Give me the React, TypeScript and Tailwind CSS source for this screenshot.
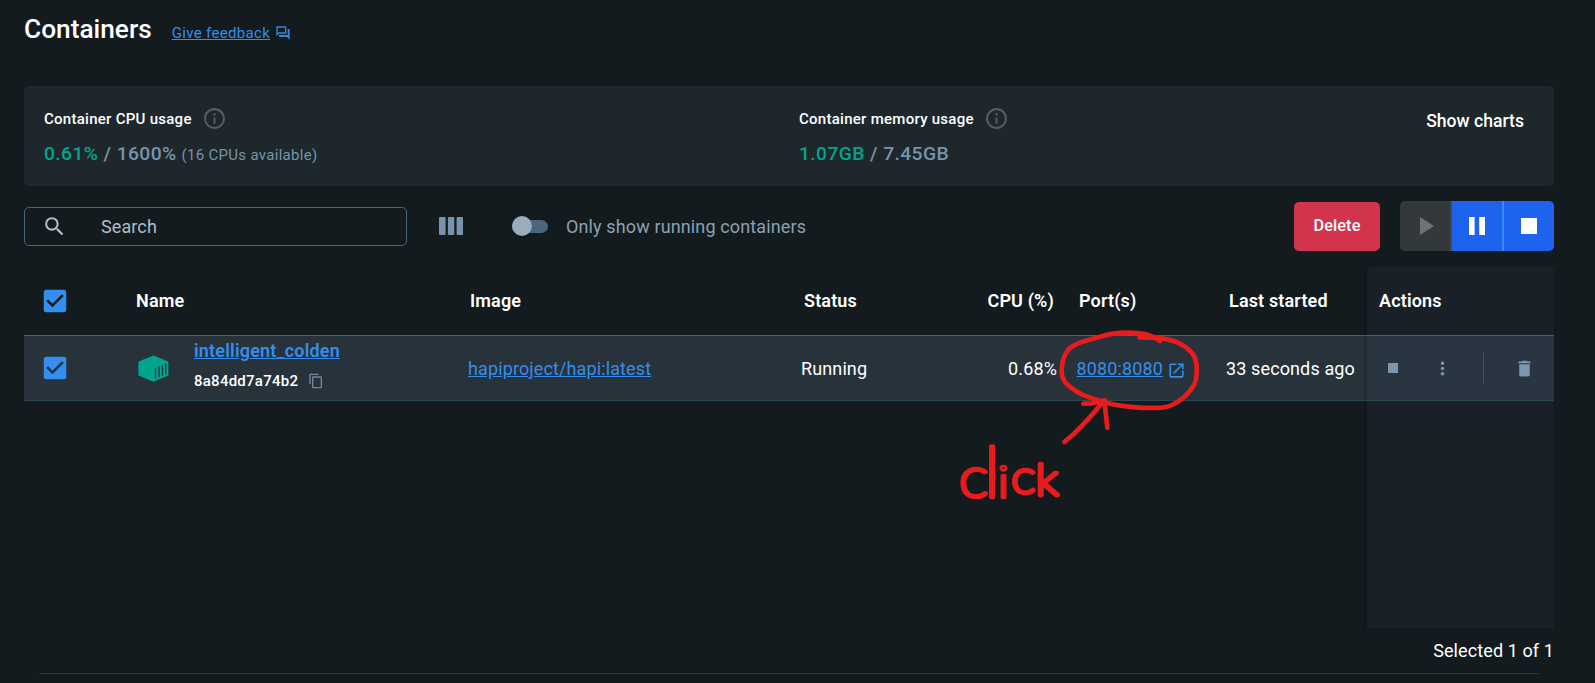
import type { ReactNode } from "react";
import {
  MdCheckBox,
  MdContentCopy,
  MdDelete,
  MdInfoOutline,
  MdMoreVert,
  MdOpenInNew,
  MdOutlineForum,
  MdSearch,
} from "react-icons/md";

const COLUMNS = "grid grid-cols-[112px_332px_333px_156px_119px_150px_141px] items-center";

function ColumnsIcon() {
  return (
    <svg className="h-[18px] w-6 fill-[#7794ab]" viewBox="0 0 24 18">
      <rect x="0" y="0" width="6.6" height="18" rx="1" />
      <rect x="8.9" y="0" width="6.4" height="18" rx="1" />
      <rect x="17.6" y="0" width="6.4" height="18" rx="1" />
    </svg>
  );
}

function ContainerIcon() {
  return (
    <svg className="h-[27px] w-[31px]" viewBox="0 0 31 27">
      <path
        d="M15.4 0.4 29.6 6.2Q30.4 6.6 30.4 7.4V19.6Q30.4 20.4 29.6 20.7L15.4 26.7 1.2 20.7Q0.4 20.4 0.4 19.6V7.4Q0.4 6.6 1.2 6.2Z"
        fill="#00a58c"
      />
      <path d="M17.5 13V23.6M21 11.4V22.2M24.5 9.9V20.8M27.7 8.6V19.5" stroke="#27323b" strokeWidth="1.3" />
    </svg>
  );
}

function Usage({
  title,
  used,
  total,
  note,
}: {
  title: string;
  used: string;
  total: string;
  note?: string;
}) {
  return (
    <div>
      <div className="flex h-[25px] items-center">
        <span className="pt-px text-[15px] font-medium tracking-[0.27px] text-white">{title}</span>
        <MdInfoOutline className="ml-[10px] size-[25px] text-[#555c63]" />
      </div>
      <div className="mt-[11px] flex h-6 items-baseline text-[19.25px] leading-6 font-medium tracking-[0.4px] whitespace-pre text-[#7794ab]">
        <span className="text-[#00a58c]">{used}</span>
        <span> / {total}</span>
        {note && <span className="ml-[5px] text-[15px] font-normal tracking-[0.3px]">{note}</span>}
      </div>
    </div>
  );
}

function Heading({ children, className = "" }: { children: ReactNode; className?: string }) {
  return (
    <div className={`text-[18px] leading-6 font-semibold tracking-[0.15px] text-white ${className}`}>
      {children}
    </div>
  );
}

function Annotation() {
  return (
    <svg
      className="pointer-events-none absolute top-[320px] left-[950px] h-[240px] w-[260px] overflow-visible"
      viewBox="510 180 780 720"
      fill="none"
      stroke="#e81c1c"
      strokeLinecap="round"
      strokeLinejoin="round"
    >
      <g strokeWidth="14">
        <path d="M1078 232 Q1115 232 1150 236 Q1185 242 1206 254 Q1236 272 1244 292 Q1252 312 1250 335 Q1250 365 1237 383 Q1218 410 1195 424 Q1170 441 1145 443 Q1105 445 1068 442 Q1020 439 985 430 Q935 416 905 403 Q870 384 855 366 Q844 350 845 328 Q847 290 865 269 Q878 255 905 246 L960 230 Q1000 218 1040 218 Q1085 218 1110 227 Q1130 234 1140 243" />
        <path d="M853 546 L882 521 Q925 480 968 426 M910 431 L938 430 L975 421 M974 430 L978 468 L982 503" />
      </g>
      <g fontFamily="Lato, sans-serif" fontWeight="100" fontSize="168" strokeWidth="14">
        <text transform="translate(538 711) scale(1.12 1)">
          <tspan x="0">c</tspan>
          <tspan x="66" fontSize="208">l</tspan>
          <tspan x="104" fontSize="128">i</tspan>
          <tspan x="140" dy="-13" fontSize="138">c</tspan>
          <tspan x="204" dy="6" fontSize="134">k</tspan>
        </text>
      </g>
    </svg>
  );
}

export default function App() {
  return (
    <main className="relative flex h-[683px] w-full flex-col overflow-hidden bg-[#141b1e] pr-[41px] pl-6 font-['Roboto',sans-serif] text-white">
      <header className="flex h-[86px] items-baseline pt-[13px]">
        <h1 className="text-[26.25px] leading-8 font-medium">Containers</h1>
        <a className="ml-5 text-[15px] tracking-[0.33px] text-[#338eef] underline underline-offset-1">Give feedback</a>
        <MdOutlineForum className="mt-[12px] ml-[5px] size-4 self-start text-[#3188df]" />
      </header>

      <section className="flex h-[100px] shrink-0 rounded-[5px] bg-[#1d272c] pt-5 pr-[30px] pl-5">
        <div className="w-[755px]">
          <Usage title="Container CPU usage" used="0.61%" total="1600%" note="(16 CPUs available)" />
        </div>
        <Usage title="Container memory usage" used="1.07GB" total="7.45GB" />
        <button className="mt-[3px] ml-auto h-6 text-[17.6px] leading-6 font-medium">Show charts</button>
      </section>

      <section className="flex h-20 shrink-0 items-center">
        <label className="flex h-[39px] w-[383px] items-center rounded-[5px] border border-[#4a6479] pl-[17px]">
          <MdSearch className="size-[25px] text-[#adbecb]" />
          <span className="ml-[34px] pt-[2px] text-[18px] leading-6 tracking-[0.1px] text-[#adbecb]">Search</span>
        </label>
        <button className="ml-8">
          <ColumnsIcon />
        </button>
        <span className="ml-[49px] flex h-5 w-9 items-center">
          <span className="h-[13px] w-9 rounded-full bg-[#4c677c]">
            <span className="-mt-[3.5px] block size-5 rounded-full bg-[#98adbd] shadow" />
          </span>
        </span>
        <span className="ml-[18px] pt-[2px] text-[18px] leading-6 tracking-[0.13px] text-[#8aa1b4]">Only show running containers</span>
        <button className="ml-auto h-[49px] w-[86px] rounded-[5px] bg-[#d1344c] text-[16.25px] font-medium tracking-[0.1px]">
          Delete
        </button>
        <div className="ml-5 flex h-[50px] w-[154px] overflow-hidden rounded-[5px]">
          <button className="flex w-[52px] items-center justify-center border-r-2 border-[#45494c] bg-[#33383b]">
            <svg className="ml-[3px] h-[18px] w-[14px] fill-[#6f7375]" viewBox="0 0 14 18">
              <path d="M0 0 14 9 0 18Z" />
            </svg>
          </button>
          <button className="flex w-[52px] items-center justify-center border-r-2 border-[#338eef] bg-[#1d63ed]">
            <svg className="h-[18px] w-4 fill-white" viewBox="0 0 16 18">
              <path d="M0 0H5.6V18H0ZM10.2 0H16V18H10.2Z" />
            </svg>
          </button>
          <button className="flex flex-1 items-center justify-center bg-[#1d63ed]">
            <span className="size-4 bg-white" />
          </button>
        </div>
      </section>

      <section className="flex h-[362px] shrink-0">
        <div className="w-[1343px]">
          <div className={`h-[69px] pt-px ${COLUMNS}`}>
            <MdCheckBox className="ml-4 size-[30px] text-[#338eef]" />
            <Heading>Name</Heading>
            <Heading className="pl-[2px]">Image</Heading>
            <Heading className="pl-[3px]">Status</Heading>
            <Heading className="pr-[22px] text-right">CPU (%)</Heading>
            <Heading className="pl-[3px]">Port(s)</Heading>
            <Heading className="pl-[3px]">Last started</Heading>
          </div>
          <div
            className={`h-[66px] border-t border-b border-t-[#575c5e] border-b-[#2d4852] bg-[#27323b] text-[18px] leading-6 tracking-[0.12px] ${COLUMNS}`}
          >
            <MdCheckBox className="ml-4 size-[30px] text-[#338eef]" />
            <div className="flex h-full items-center">
              <span className="ml-[2px]">
                <ContainerIcon />
              </span>
              <div className="ml-[25px] h-full pt-[3px]">
                <a className="block h-6 leading-6 font-semibold tracking-[0.18px] text-[#338eef] underline underline-offset-1">
                  intelligent_colden
                </a>
                <div className="mt-[6px] flex h-6 items-center text-[15px] font-medium tracking-[0.25px]">
                  8a84dd7a74b2
                  <MdContentCopy className="ml-[10px] size-4 text-[#6f8ba1]" />
                </div>
              </div>
            </div>
            <a className="pt-[2px] text-[#338eef] underline underline-offset-1">hapiproject/hapi:latest</a>
            <span className="pt-[2px]">Running</span>
            <span className="pt-[2px] pr-[19px] text-right">0.68%</span>
            <a className="flex items-center pt-[2px] pl-[0.5px] text-[#338eef]">
              <span className="underline underline-offset-1">8080:8080</span>
              <MdOpenInNew className="mt-[3px] ml-1 size-[19px]" />
            </a>
            <span className="pt-[2px]">33 seconds ago</span>
          </div>
        </div>

        <div className="w-[187px] rounded-t-[5px] bg-[#1a2027] shadow-[-2px_0_3px_rgba(0,0,0,0.12)]">
          <div className="flex h-[69px] items-center pt-px pl-3">
            <Heading>Actions</Heading>
          </div>
          <div className="flex h-[66px] items-center border-t border-b border-t-[#575c5e] border-b-[#2d4852] bg-[#293540] pl-[21px] text-[#7b97ad]">
            <span className="size-[10px] bg-[#7b97ad]" />
            <MdMoreVert className="ml-[34px] size-[21px]" />
            <span className="ml-[30px] h-[30px] w-px bg-[#42515e]" />
            <MdDelete className="ml-[30px] size-[21px]" />
          </div>
        </div>
      </section>

      <footer className="mx-[15px] flex h-[46px] shrink-0 items-start justify-end border-b border-[#303639] pt-[11px]">
        <span className="-mr-[15px] text-[18px] leading-6 tracking-[0.1px]">Selected 1 of 1</span>
      </footer>

      <Annotation />
    </main>
  );
}
